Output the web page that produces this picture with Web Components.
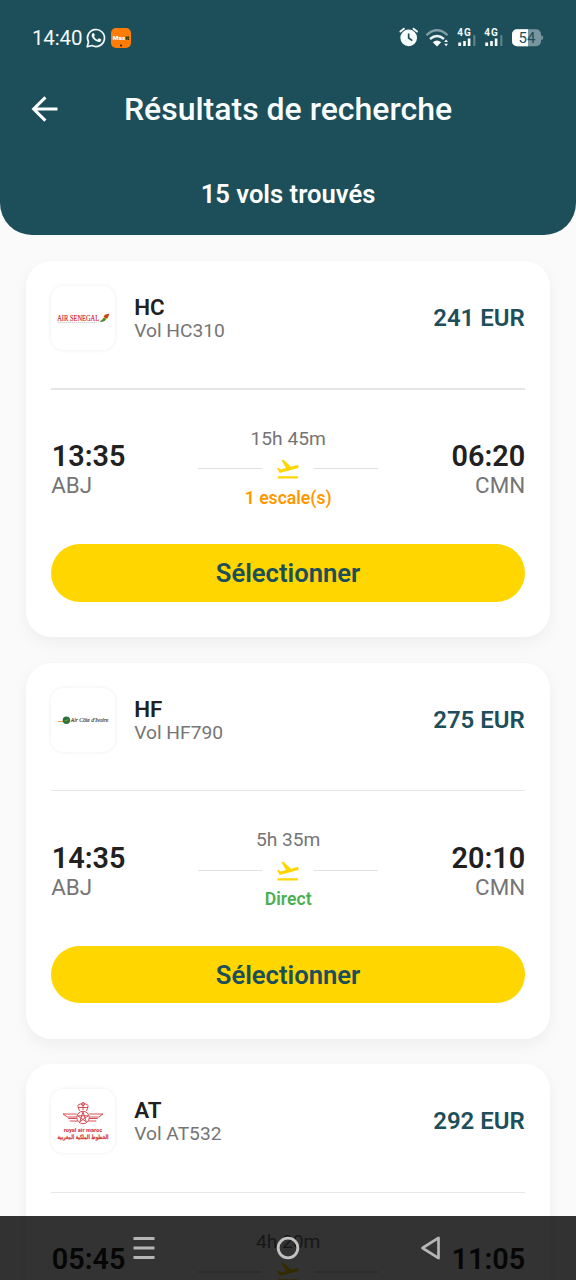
<!DOCTYPE html>
<html lang="fr">
<head>
<meta charset="utf-8">
<title>Résultats de recherche</title>
<style>
html,body{margin:0;height:1280px;overflow:hidden;background:#fafafa;font-family:Roboto,"Noto Sans",sans-serif}
</style>
</head>
<body>
<flight-app></flight-app>
<script>
function define(name, html, setup) {
  const tpl = document.createElement('template');
  tpl.innerHTML = html;
  customElements.define(name, class extends HTMLElement {
    constructor() {
      super();
      this.attachShadow({mode: 'open'}).append(tpl.content.cloneNode(true));
    }
    connectedCallback() { if (setup) setup(this, this.shadowRoot); }
  });
}

define('status-bar', `
<style>
:host{display:flex;align-items:center;height:75px;padding:0 33px 0 32px;color:#f4fafa;box-sizing:border-box}
.time{font-size:20.5px;line-height:24px;width:50px;letter-spacing:-.15px;margin-right:4px;white-space:nowrap}
svg{display:block;flex:none;overflow:visible}
.space{flex:1}
</style>
<span class="time">14:40</span>
<svg width="20" height="20" viewBox="0 0 20 20" style="margin-right:5px"><path d="M1.2 18.8 2.5 14A8.5 8.5 0 1 1 6 17.5Z" fill="none" stroke="#f4fafa" stroke-width="1.7" stroke-linejoin="round"/><path d="M6.3 5.5c.8-.9 1.5-.7 1.8 0l.7 1.6c.2.5-.5 1-.8 1.4.8 1.6 1.9 2.6 3.5 3.2l1-1.1c.3-.3.6-.3 1-.1l1.6.8c.6.4.1 1.6-.5 2.1-1.4 1.1-3.4.5-5.1-.6-1.7-1.2-3-2.8-3.6-4.3-.4-1.2-.2-2.2.4-3Z" fill="#f4fafa"/></svg>
<svg width="20" height="20" viewBox="0 0 20 20"><rect width="20" height="20" rx="5" fill="#ff7c05"/><text x="1.8" y="12.2" font-family="Roboto" font-size="5.8" font-weight="900" fill="#fff" textLength="12.5" lengthAdjust="spacingAndGlyphs">Max</text><text x="14.3" y="12.2" font-family="Roboto" font-size="6" font-weight="900" fill="#221400" textLength="3.6" lengthAdjust="spacingAndGlyphs">it</text><circle cx="10" cy="17.5" r="1" fill="#221400"/></svg>
<span class="space"></span>
<svg width="144" height="22" viewBox="399 27 144 22" font-family="Roboto">
 <path fill="#f8fdfd" fill-rule="evenodd" d="M408.7 29.5a8.3 8.3 0 1 1 0 16.7 8.3 8.3 0 0 1 0-16.7Zm-.9 4v5l4 2.8 1-1.4-3.3-2.3v-4.1Z"/>
 <path d="m400.4 31.6 3.5-2.9m9.6 0 3.5 2.9" stroke="#f8fdfd" stroke-width="1.9" stroke-linecap="round"/>
 <g fill="none" stroke-width="2.4"><path d="M426.5 35.2q10.5-9.7 21 0" stroke="#819fa7"/><path d="M430 39q7-6 14 0" stroke="#eaf3f5"/></g>
 <path d="M432.8 42.2q4.2-3.4 8.4 0L437 46.6Z" fill="#fff"/><path d="m444.2 42 1.9-2.5 1.9 2.5Zm0 1.7 1.9 2.5 1.9-2.5Z" fill="#fff"/>
 <g id="sig"><text x="457.2" y="36.3" font-size="10" font-weight="700" fill="#f4fafa" textLength="13.6">4G</text><path d="M458.3 42.5h2.8V46h-2.8zM463.2 41h2.6v5h-2.6zM467.8 38.6h2.6V46h-2.6z" fill="#fff"/><path d="M473.2 35.2h2.2V46h-2.2z" fill="#5d828a"/></g>
 <use href="#sig" x="27"/>
 <rect x="512" y="29.2" width="29" height="17" rx="5" fill="#7996a0"/><path d="M528 29.2v17h-11a5 5 0 0 1-5-5v-7a5 5 0 0 1 5-5Z" fill="#fff"/><path d="M541.2 35.2q2 .3 2 2.5t-2 2.5Z" fill="#7996a0"/>
 <text x="518.5" y="43.2" font-size="15" fill="#1d4f5b">54</text>
</svg>`);

define('results-header', `
<style>
:host{display:block;height:235px;box-sizing:border-box;background:#1d4f5b;color:#fff;border-radius:0 0 32px 32px}
.bar{display:grid;grid-template-columns:60px 1fr 60px;align-items:center;height:68px}
.bar svg{display:block;margin-left:28px}
h1{margin:0;font-size:32px;line-height:40px;font-weight:500;text-align:center;white-space:nowrap;color:#fafdfd}
p{margin:35px 0 0;font-size:25.6px;line-height:32px;font-weight:600;text-align:center}
</style>
<status-bar></status-bar>
<div class="bar">
<svg width="34" height="34" viewBox="0 0 34 34" fill="none" stroke="#fff" stroke-width="3.1"><path d="M29.5 17H6.5M17.4 5.3 5.7 17l11.7 11.7"/></svg>
<h1><slot name="title"></slot></h1></div>
<p><slot name="count"></slot></p>`);

const logos = {
HC: `<text x="6.2" y="35" font-family="Liberation Serif" font-size="7.6" fill="#cf2638" stroke="#cf2638" stroke-width=".18" textLength="42" lengthAdjust="spacingAndGlyphs">AIR SENEGAL</text><path d="M6.5 36.6h39" stroke="#bbb" stroke-width=".7" stroke-dasharray="1.5 .5"/><path d="M49 35q4-1.5 4.5-6.5h4.3q-.2 7-8.8 6.5Z" fill="#e5c51f"/><path d="M52.5 30.5q2-3 5.8-2.8l-1.8 4.6q-2 .3-4-1.8Z" fill="#cc3b31"/><path d="M48.2 36q3.4-1 4.4-4.2l2 1q1 3-6.4 3.2Z" fill="#42823c"/>`,
HF: `<path d="M7 33.5h8" stroke="#ee9958" stroke-width="1"/><circle cx="15.4" cy="32.3" r="3.7" fill="#287337"/><path d="M13.2 32.5q2.4-.2 4.4-1.7-1.3 3.3-4.4 1.7Z" fill="#8aa33a"/><text x="19.8" y="34.2" font-family="Liberation Serif" font-style="italic" font-size="6.6" fill="#333" stroke="#333" stroke-width=".15" textLength="37.5" lengthAdjust="spacingAndGlyphs">Air Côte d'Ivoire</text>`,
AT: `<g fill="none" stroke="#d13b41" stroke-width=".9"><circle cx="32" cy="28.5" r="6.2"/><path d="m32 23 3.2 9.8-8.4-6h10.4l-8.4 6ZM28.5 22l-1.2-3.5h9.4L35.5 22M27.3 18.5q-1.8-4 4.7-3.5 6.5-.5 4.7 3.5M32 16v5M25.8 25H12l4.3 3h9.4m-8.4 1.5h8.4m-7 2.5h8M38.2 25H52l-4.3 3h-9.4m8.4 1.5h-8.4m7 2.5h-8"/><circle cx="32" cy="15" r="1.5"/></g><text x="12.7" y="43" font-family="Roboto" font-size="5.6" font-weight="800" fill="#d13b41" textLength="38.5" lengthAdjust="spacingAndGlyphs">royal air maroc</text><text x="32" y="49.6" text-anchor="middle" font-family="DejaVu Sans" font-size="6" font-weight="700" fill="#d13b41" stroke="#d13b41" stroke-width=".25" textLength="51" lengthAdjust="spacingAndGlyphs">الخطوط الملكية المغربية</text>`
};
define('airline-logo', `
<style>
:host{display:block;width:64px;height:64px;border-radius:12.8px;background:#fff;box-shadow:0 0 4px rgba(0,0,0,.075)}
svg{display:block;overflow:visible}
</style><svg width="64" height="64" viewBox="0 0 64 64"></svg>`,
(el, r) => r.querySelector('svg').innerHTML = logos[el.getAttribute('code')]);

define('flight-route', `
<style>
:host{display:grid;grid-template-columns:147px 180px 147px;height:154.4px;color:#757575}
.end{padding-top:49.4px}
.right{text-align:right}
b{display:block;font-size:28.8px;line-height:34px;font-weight:600;color:#212121;margin-left:.6px}
.city{display:block;font-size:22.4px;line-height:24px}
.right b{margin:0}
.mid{display:flex;flex-direction:column;align-items:center;padding-top:37px}
.dur{font-size:19.2px;line-height:24px}
.line{display:flex;align-items:center;justify-content:space-between;width:180px;height:26px;margin:5px 0 5px}
.line i{width:64px;height:1.4px;background:#e0e0e0}
svg{display:block}
.stops{font-size:17.6px;line-height:22px;font-weight:600;color:#ff9800}
.stops.direct{color:#4caf50}
</style>
<div class="end"><b class="dep"></b><span class="city">ABJ</span></div>
<div class="mid"><span class="dur"></span>
<div class="line"><i></i><svg width="25.6" height="25.6" viewBox="0 0 24 24"><path fill="#ffd600" d="M2.5 19h19v2h-19v-2zm19.57-9.36c-.21-.8-1.04-1.28-1.84-1.06L14.92 10 8 3.57l-1.91.51 4.14 7.17-4.97 1.33-1.97-1.54-1.45.39 2.59 4.49L21 11.49c.81-.23 1.28-1.05 1.07-1.85z"/></svg><i></i></div>
<span class="stops"></span></div>
<div class="end right"><b class="arr"></b><span class="city">CMN</span></div>`,
(el, r) => {
  for (const k of ['dep', 'dur', 'stops', 'arr']) r.querySelector('.' + k).textContent = el.getAttribute(k);
  if (el.getAttribute('stops') === 'Direct') r.querySelector('.stops').classList.add('direct');
});

define('select-button', `
<style>
:host{display:block}
button{display:block;width:100%;height:57.6px;border:0;border-radius:29px;background:#ffd600;color:#1d4f5b;font:600 25.6px/57.6px Roboto,sans-serif;padding:1px 0 0;text-align:center}
</style><button><slot></slot></button>`);

define('flight-card', `
<style>
:host{display:block;box-sizing:border-box;height:376px;padding:25.2px 25.6px;border-radius:25.6px;background:#fff;box-shadow:0 6px 16px rgba(0,0,0,.05)}
.head{display:flex;height:64px;align-items:center}
.name{margin-left:19px;flex:1;padding-top:1px}
.code{display:block;font-size:22.4px;line-height:24px;font-weight:600;color:#212121}
.vol{display:block;font-size:19.2px;line-height:23px;color:#757575}
.price{font-size:24px;line-height:30px;font-weight:600;color:#1d4f5b}
hr{height:1.4px;margin:38.2px 0 0;border:0;background:#e6e6e6}
</style>
<div class="head"><airline-logo></airline-logo><div class="name"><span class="code"></span><span class="vol"></span></div><span class="price"></span></div>
<hr>
<flight-route></flight-route>
<select-button>Sélectionner</select-button>`,
(el, r) => {
  const code = el.getAttribute('code');
  const logo = document.createElement('airline-logo');
  logo.setAttribute('code', code);
  r.querySelector('airline-logo').replaceWith(logo);
  r.querySelector('.code').textContent = code;
  r.querySelector('.vol').textContent = 'Vol ' + el.getAttribute('flight');
  r.querySelector('.price').textContent = el.getAttribute('price');
  const route = document.createElement('flight-route');
  for (const k of ['dep', 'dur', 'stops', 'arr']) route.setAttribute(k, el.getAttribute(k));
  r.querySelector('flight-route').replaceWith(route);
});

define('nav-bar', `
<style>
:host{display:grid;grid-template-columns:repeat(3,144px);justify-content:center;align-items:center;justify-items:center;height:64px;background:rgba(0,0,0,.8)}
svg{display:block}
</style>
<svg width="24" height="26" viewBox="0 0 24 26"><path d="M1.5 3.5h21m-21 9.5h21m-21 9.5h21" stroke="#b5b5b5" stroke-width="3"/></svg>
<svg width="26" height="26" viewBox="0 0 26 26"><circle cx="13" cy="13" r="9.8" fill="none" stroke="#c2c2c2" stroke-width="2.8"/></svg>
<svg width="24" height="26" viewBox="0 0 24 26"><path d="M18.5 2.8v20.4L2.5 13Z" fill="none" stroke="#b5b5b5" stroke-width="2.7" stroke-linejoin="round"/></svg>`);

define('flight-app', `
<style>
:host{display:block;width:576px;height:1280px;overflow:hidden;background:#fafafa;position:relative}
.list{display:flex;flex-direction:column;gap:25.6px;padding:26px 25.6px 0}
nav-bar{position:absolute;left:0;right:0;bottom:0}
</style>
<results-header><span slot="title">Résultats de recherche</span><span slot="count">15 vols trouvés</span></results-header>
<div class="list">
<flight-card code="HC" flight="HC310" price="241 EUR" dep="13:35" dur="15h 45m" stops="1 escale(s)" arr="06:20"></flight-card>
<flight-card code="HF" flight="HF790" price="275 EUR" dep="14:35" dur="5h 35m" stops="Direct" arr="20:10"></flight-card>
<flight-card code="AT" flight="AT532" price="292 EUR" dep="05:45" dur="4h 20m" stops="Direct" arr="11:05"></flight-card>
</div>
<nav-bar></nav-bar>`);
</script>
</body>
</html>
